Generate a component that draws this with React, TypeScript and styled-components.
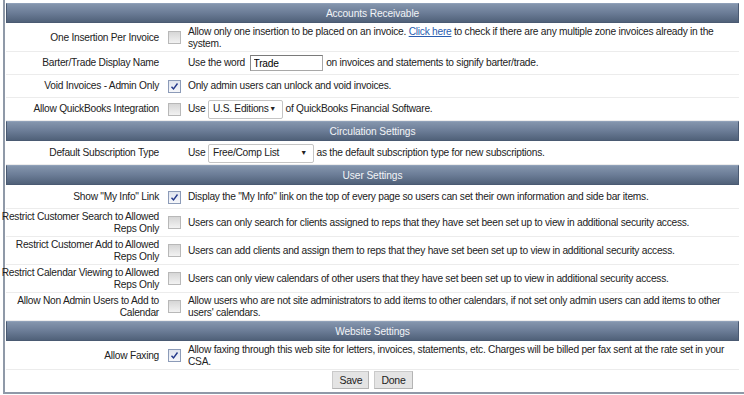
import React from 'react';
import styled, { createGlobalStyle } from 'styled-components';

const GlobalStyle = createGlobalStyle`
  html, body {
    margin: 0;
    padding: 0;
    background: #ffffff;
  }
  body {
    font-family: "Liberation Sans", Arial, sans-serif;
    font-size: 10.2px;
    letter-spacing: -0.25px;
    color: #222;
  }
`;

const Panel = styled.div`
  margin-left: 3px;
  width: 733px;
  height: 389px;
  border: 1px solid #8f99a8;
  border-top: none;
  border-bottom-width: 2px;
  border-left-width: 2px;
  padding: 3px 6px 0 1px;
  background: #fff;
`;

const Table = styled.div`
  display: flex;
  flex-direction: column;
`;

const Header = styled.div`
  box-sizing: border-box;
  height: 20px;
  margin-bottom: 1px;
  display: flex;
  align-items: center;
  justify-content: center;
  color: #f2f4f7;
  letter-spacing: -0.1px;
  background: linear-gradient(to bottom, #8495ad 0%, #6b7c96 50%, #506179 100%);
  border: 1px solid #4a5a72;
  border-top-color: #8fa0b8;
`;

const Row = styled.div`
  box-sizing: border-box;
  display: grid;
  grid-template-columns: 156px 26px 1fr;
  align-items: center;
  min-height: 23px;
  padding: 1.5px 0;
  line-height: 12px;
  border-bottom: 1px solid #ececec;
`;

const Label = styled.div`
  display: flex;
  flex-direction: column;
  align-items: flex-end;
  padding-right: 3px;
  white-space: nowrap;
`;

const CheckCell = styled.div`
  display: flex;
  align-items: center;
  padding-left: 6px;
`;

const Box = styled.span<{ $on: boolean }>`
  width: 11px;
  height: 11px;
  display: flex;
  align-items: center;
  justify-content: center;
  border: 1px solid ${(p) => (p.$on ? '#8c9bb8' : '#b8b8b8')};
  background: ${(p) =>
    p.$on
      ? 'linear-gradient(to bottom, #dfe4ee, #f6f7fa)'
      : 'linear-gradient(to bottom, #d6d6d6, #f2f2f2)'};
`;

const Desc = styled.div`
  padding-right: 8px;
  white-space: nowrap;
`;

const Link = styled.a`
  color: #2a5db0;
  text-decoration: underline;
  cursor: pointer;
`;

const TextInput = styled.input`
  width: 73px;
  height: 16px;
  box-sizing: border-box;
  font: inherit;
  letter-spacing: inherit;
  padding: 0 3px;
  margin: 0 1px 0 2px;
  vertical-align: middle;
  border: 1px solid #a8a8a8;
  border-top-color: #7a7a7a;
  border-left-color: #8a8a8a;
  outline: none;
`;

const Select = styled.span<{ $w: number }>`
  display: inline-flex;
  align-items: center;
  justify-content: space-between;
  box-sizing: border-box;
  width: ${(p) => p.$w}px;
  height: 19px;
  padding: 0 6px 0 4px;
  vertical-align: middle;
  border: 1px solid #c4c4c4;
  border-radius: 2px;
  background: #fff;
`;

const Arrow = styled.span`
  font-size: 7px;
  color: #222;
`;

const Actions = styled.div`
  display: flex;
  justify-content: center;
  gap: 5px;
  padding: 1px 0 3px;
`;

const Button = styled.button`
  font-family: inherit;
  font-size: 10.5px;
  letter-spacing: inherit;
  color: #222;
  height: 18px;
  padding: 0 6px;
  background: #e4e4e4;
  border: 1px solid #cacaca;
  border-bottom-color: #b4b4b4;
  border-right-color: #b4b4b4;
  cursor: pointer;
`;

type Setting = {
  label: string[];
  check?: 'on' | 'off';
  desc: React.ReactNode;
};

type Section = {
  title: string;
  rows: Setting[];
};

const CheckMark = ({ on }: { on: boolean }) => (
  <Box $on={on}>
    {on && (
      <svg width="9" height="9" viewBox="0 0 9 9">
        <path d="M1.5 4.8 L3.5 7 L7.5 1.5" fill="none" stroke="#23388a" strokeWidth="1.4" />
      </svg>
    )}
  </Box>
);

const sections: Section[] = [
  {
    title: 'Accounts Receivable',
    rows: [
      {
        label: ['One Insertion Per Invoice'],
        check: 'off',
        desc: (
          <>
            Allow only one insertion to be placed on an invoice. <Link>Click here</Link> to check if there are any
            multiple zone invoices already in the
            <br />
            system.
          </>
        ),
      },
      {
        label: ['Barter/Trade Display Name'],
        desc: (
          <>
            Use the word <TextInput defaultValue="Trade" /> on invoices and statements to signify barter/trade.
          </>
        ),
      },
      {
        label: ['Void Invoices - Admin Only'],
        check: 'on',
        desc: 'Only admin users can unlock and void invoices.',
      },
      {
        label: ['Allow QuickBooks Integration'],
        check: 'off',
        desc: (
          <>
            Use <Select $w={75}>U.S. Editions<Arrow>▼</Arrow></Select> of QuickBooks Financial Software.
          </>
        ),
      },
    ],
  },
  {
    title: 'Circulation Settings',
    rows: [
      {
        label: ['Default Subscription Type'],
        desc: (
          <>
            Use <Select $w={106}>Free/Comp List<Arrow>▼</Arrow></Select> as the default subscription type for new
            subscriptions.
          </>
        ),
      },
    ],
  },
  {
    title: 'User Settings',
    rows: [
      {
        label: ['Show "My Info" Link'],
        check: 'on',
        desc: 'Display the "My Info" link on the top of every page so users can set their own information and side bar items.',
      },
      {
        label: ['Restrict Customer Search to Allowed', 'Reps Only'],
        check: 'off',
        desc: 'Users can only search for clients assigned to reps that they have set been set up to view in additional security access.',
      },
      {
        label: ['Restrict Customer Add to Allowed', 'Reps Only'],
        check: 'off',
        desc: 'Users can add clients and assign them to reps that they have set been set up to view in additional security access.',
      },
      {
        label: ['Restrict Calendar Viewing to Allowed', 'Reps Only'],
        check: 'off',
        desc: 'Users can only view calendars of other users that they have set been set up to view in additional security access.',
      },
      {
        label: ['Allow Non Admin Users to Add to', 'Calendar'],
        check: 'off',
        desc: (
          <>
            Allow users who are not site administrators to add items to other calendars, if not set only admin users can
            add items to other
            <br />
            users' calendars.
          </>
        ),
      },
    ],
  },
  {
    title: 'Website Settings',
    rows: [
      {
        label: ['Allow Faxing'],
        check: 'on',
        desc: (
          <>
            Allow faxing through this web site for letters, invoices, statements, etc. Charges will be billed per fax
            sent at the rate set in your
            <br />
            CSA.
          </>
        ),
      },
    ],
  },
];

const App = () => {
  return (
    <>
      <GlobalStyle />
      <Panel>
        <Table>
          {sections.map((s) => (
            <React.Fragment key={s.title}>
              <Header>{s.title}</Header>
              {s.rows.map((r) => (
                <Row key={r.label.join(' ')}>
                  <Label>
                    {r.label.map((line) => (
                      <span key={line}>{line}</span>
                    ))}
                  </Label>
                  <CheckCell>{r.check && <CheckMark on={r.check === 'on'} />}</CheckCell>
                  <Desc>{r.desc}</Desc>
                </Row>
              ))}
            </React.Fragment>
          ))}
          <Actions>
            <Button>Save</Button>
            <Button>Done</Button>
          </Actions>
        </Table>
      </Panel>
    </>
  );
};

export default App;
